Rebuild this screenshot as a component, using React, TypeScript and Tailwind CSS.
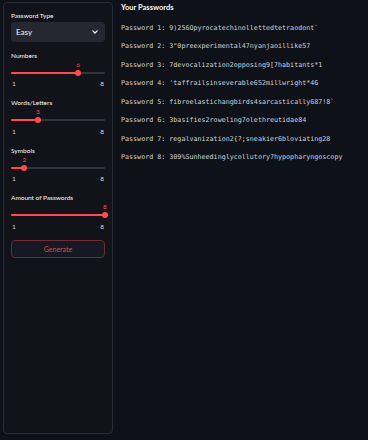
import React from "react";

const passwords = [
  "9)256Opyrocatechinollettedtetraodont`",
  '3"0preexperimental47nyanjaoillike57',
  "7devocalization2opposing9[7habitants*1",
  "'taffrailsinseverable652millwright*46",
  "fibroelastichangbirds4sarcastically687!8`",
  "3basifies2roweling7olethreutidae84",
  "regalvanization2{?;sneakier6bloviating28",
  "309%Sunheedinglycollutory7hypopharyngoscopy",
];

function Slider({ label, value, last }: { label: string; value: number; last?: boolean }) {
  const pct = ((value - 1) / 7) * 100;
  return (
    <div className={last ? "" : "mb-[10px]"}>
      <div className="h-[9px] text-[6.5px] leading-[9px] text-[#fafafa]">{label}</div>
      <div className="relative h-[9px]">
        <span
          className="absolute top-0 -translate-x-1/2 text-[6.5px] leading-[9px] text-[#ff4b4b]"
          style={{ left: `${pct}%` }}
        >
          {value}
        </span>
      </div>
      <div className="relative h-[8px]">
        <div className="absolute left-0 right-0 top-[3px] h-[2px] rounded-full bg-[#33343c]" />
        <div
          className="absolute left-0 top-[3px] h-[2px] rounded-full bg-[#ff4b4b]"
          style={{ width: `${pct}%` }}
        />
        <div
          className="absolute top-[1px] h-[6px] w-[6px] -translate-x-1/2 rounded-full bg-[#ff4b4b]"
          style={{ left: `${pct}%` }}
        />
      </div>
      <div className="mt-[2.5px] flex h-[9px] justify-between px-[1px] text-[6.5px] leading-[9px] text-[#cfd1d6]">
        <span>1</span>
        <span>8</span>
      </div>
    </div>
  );
}

export default function App() {
  return (
    <div
      className="flex h-[440px] w-[368px] bg-[#0e1117] pl-[3px] pt-[2px]"
      style={{ fontFamily: "Lato, 'Noto Sans', sans-serif" }}
    >
      <div className="h-[432px] w-[110px] shrink-0 rounded-[4px] border border-[#2a2c33] bg-[#111318] px-[7px]">
        <div className="mt-[7.5px] h-[9px] text-[6.5px] leading-[9px] text-[#fafafa]">Password Type</div>
        <div className="mt-[2.5px] flex h-[20px] items-center justify-between rounded-[4px] bg-[#262730] pl-[5px] pr-[7px]">
          <span className="text-[8px] text-[#fafafa]">Easy</span>
          <svg width="6" height="4" viewBox="0 0 6 4">
            <polyline points="0.8,0.8 3,3 5.2,0.8" fill="none" stroke="#fafafa" strokeWidth="1.2" strokeLinecap="round" strokeLinejoin="round" />
          </svg>
        </div>
        <div className="mt-[8.5px]">
          <Slider label="Numbers" value={6} />
          <Slider label="Words/Letters" value={3} />
          <Slider label="Symbols" value={2} />
          <Slider label="Amount of Passwords" value={8} last />
        </div>
        <button className="mt-[9px] flex h-[18.5px] w-full items-center justify-center rounded-[4px] border border-[#6e2b32] bg-[#161922] text-[7px] text-[#d9474e]">
          Generate
        </button>
      </div>
      <div className="ml-[8px] flex flex-col">
        <div className="mt-[0.5px] h-[10px] text-[7.5px] font-bold leading-[10px] text-[#fafafa]">Your Passwords</div>
        <div className="mt-[6px] flex flex-col">
          {passwords.map((p, i) => (
            <div
              key={i}
              className="h-[18.5px] whitespace-pre text-[6.7px] leading-[18.5px] text-[#d2d3d6]"
              style={{ fontFamily: "'DejaVu Sans Mono', 'Liberation Mono', monospace" }}
            >
              {`Password ${i + 1}: ${p}`}
            </div>
          ))}
        </div>
      </div>
    </div>
  );
}
